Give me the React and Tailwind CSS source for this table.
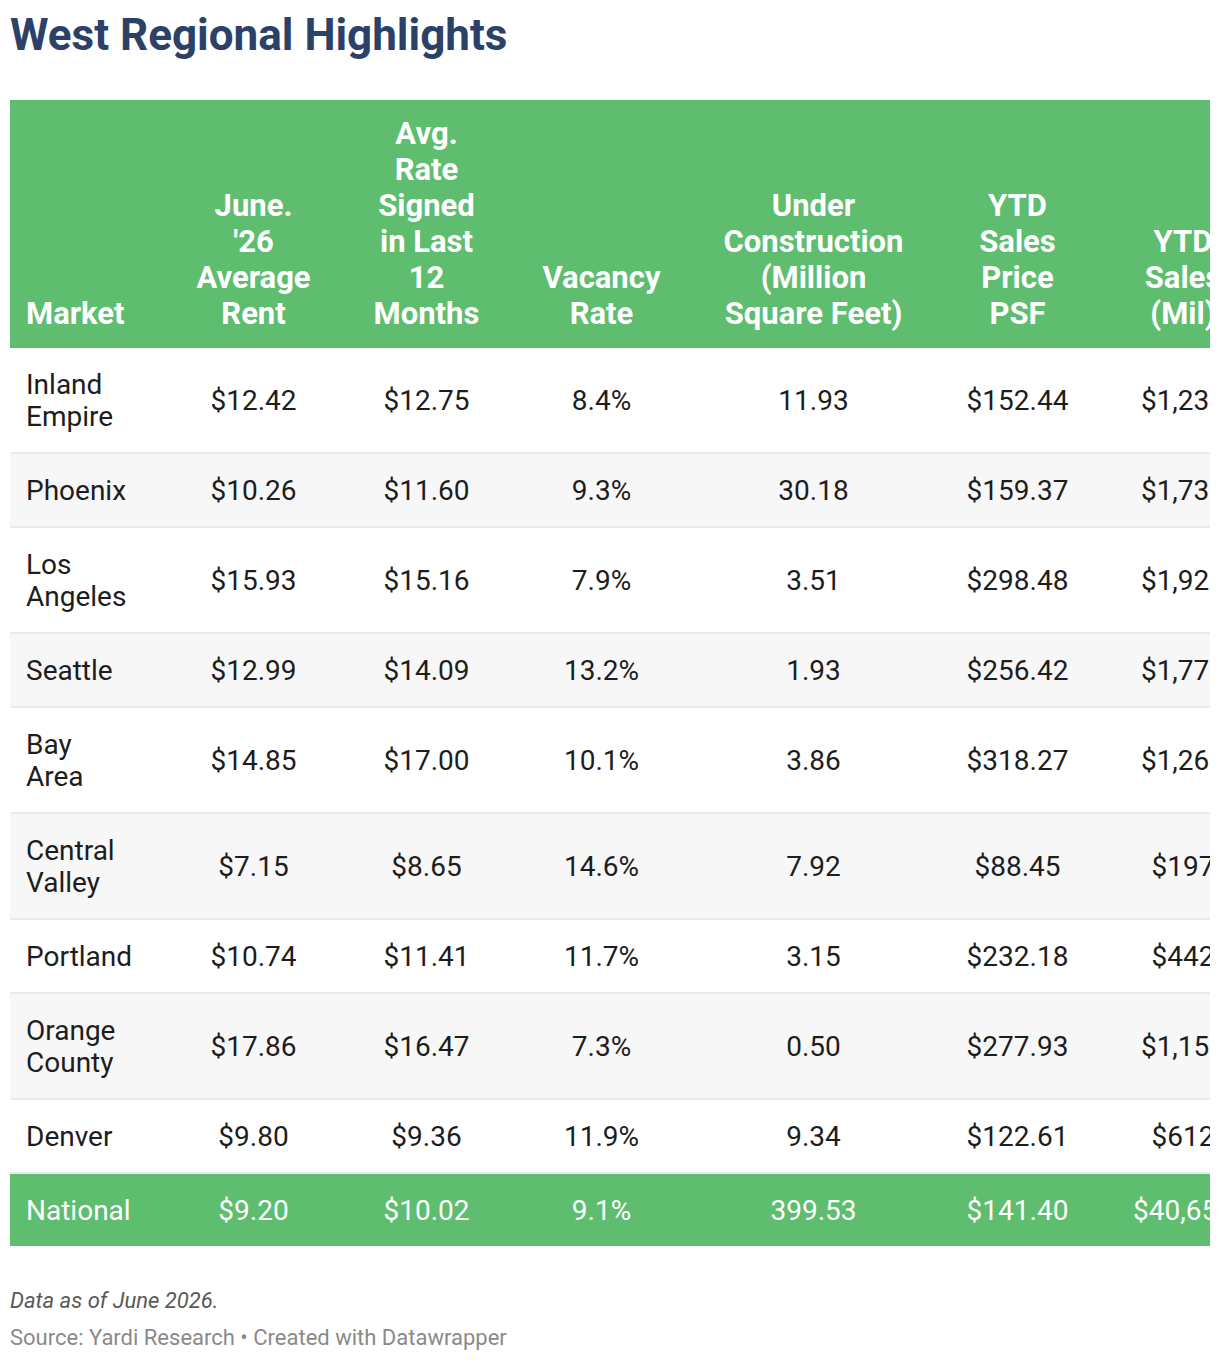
const rows = [
  { market: ["Inland", "Empire"], rent: "$12.42", signed: "$12.75", vacancy: "8.4%", uc: "11.93", psf: "$152.44", sales: "$1,234" },
  { market: ["Phoenix"], rent: "$10.26", signed: "$11.60", vacancy: "9.3%", uc: "30.18", psf: "$159.37", sales: "$1,738" },
  { market: ["Los", "Angeles"], rent: "$15.93", signed: "$15.16", vacancy: "7.9%", uc: "3.51", psf: "$298.48", sales: "$1,925" },
  { market: ["Seattle"], rent: "$12.99", signed: "$14.09", vacancy: "13.2%", uc: "1.93", psf: "$256.42", sales: "$1,772" },
  { market: ["Bay", "Area"], rent: "$14.85", signed: "$17.00", vacancy: "10.1%", uc: "3.86", psf: "$318.27", sales: "$1,261" },
  { market: ["Central", "Valley"], rent: "$7.15", signed: "$8.65", vacancy: "14.6%", uc: "7.92", psf: "$88.45", sales: "$197" },
  { market: ["Portland"], rent: "$10.74", signed: "$11.41", vacancy: "11.7%", uc: "3.15", psf: "$232.18", sales: "$442" },
  { market: ["Orange", "County"], rent: "$17.86", signed: "$16.47", vacancy: "7.3%", uc: "0.50", psf: "$277.93", sales: "$1,153" },
  { market: ["Denver"], rent: "$9.80", signed: "$9.36", vacancy: "11.9%", uc: "9.34", psf: "$122.61", sales: "$612" },
];

const national = { market: ["National"], rent: "$9.20", signed: "$10.02", vacancy: "9.1%", uc: "399.53", psf: "$141.40", sales: "$40,655" };

const headers = [
  ["Market"],
  ["June.", "'26", "Average", "Rent"],
  ["Avg.", "Rate", "Signed", "in Last", "12", "Months"],
  ["Vacancy", "Rate"],
  ["Under", "Construction", "(Million", "Square Feet)"],
  ["YTD", "Sales", "Price", "PSF"],
  ["YTD", "Sales", "(Mil)"],
];

const Lines = ({ lines }) =>
  lines.map((l, i) => (
    <span key={i} className="block whitespace-nowrap">
      {l}
    </span>
  ));

const Row = ({ r, striped, total }) => {
  const base = total
    ? "bg-[#5ebd6e] text-white"
    : `${striped ? "bg-[#f7f7f7]" : "bg-white"} text-[#1d1d1d] border-b-2 border-[#ebebeb]`;
  const cell = "pt-[21px] pb-[19px] px-[16px] text-center align-middle";
  return (
    <tr className={base}>
      <td className="pt-[21px] pb-[19px] px-[16px] text-left align-middle">
        <Lines lines={r.market} />
      </td>
      <td className={cell}>{r.rent}</td>
      <td className={cell}>{r.signed}</td>
      <td className={cell}>{r.vacancy}</td>
      <td className={cell}>{r.uc}</td>
      <td className={cell}>{r.psf}</td>
      <td className={cell}>{r.sales}</td>
    </tr>
  );
};

export default function App() {
  return (
    <div className="bg-white min-h-[1360px] px-[10px] pt-[9px] font-['Roboto',sans-serif]">
      <h1 className="text-[44px] leading-[52px] font-bold text-[#2c4167]">
        West Regional Highlights
      </h1>

      <div className="mt-[39px] w-[1200px] overflow-hidden">
        <table className="table-fixed border-collapse w-[1258px] text-[28px] leading-[32px]">
          <colgroup>
            <col className="w-[157px]" />
            <col className="w-[173px]" />
            <col className="w-[173px]" />
            <col className="w-[177px]" />
            <col className="w-[247px]" />
            <col className="w-[161px]" />
            <col className="w-[170px]" />
          </colgroup>
          <thead>
            <tr className="bg-[#5ebd6e] text-white">
              {headers.map((h, i) => (
                <th
                  key={i}
                  className={`pt-[16px] pb-[16px] px-[16px] align-bottom font-bold text-[31px] leading-[36px] ${
                    i === 0 ? "text-left" : "text-center"
                  }`}
                >
                  <Lines lines={h} />
                </th>
              ))}
            </tr>
          </thead>
          <tbody>
            {rows.map((r, i) => (
              <Row key={i} r={r} striped={i % 2 === 1} />
            ))}
            <Row r={national} total />
          </tbody>
        </table>
      </div>

      <p className="mt-[41px] text-[22px] leading-[28px] italic text-[#595959]">
        Data as of June 2026.
      </p>
      <p className="mt-[9px] text-[22px] leading-[28px] text-[#8a8a8a]">
        Source: Yardi Research • Created with Datawrapper
      </p>
    </div>
  );
}
